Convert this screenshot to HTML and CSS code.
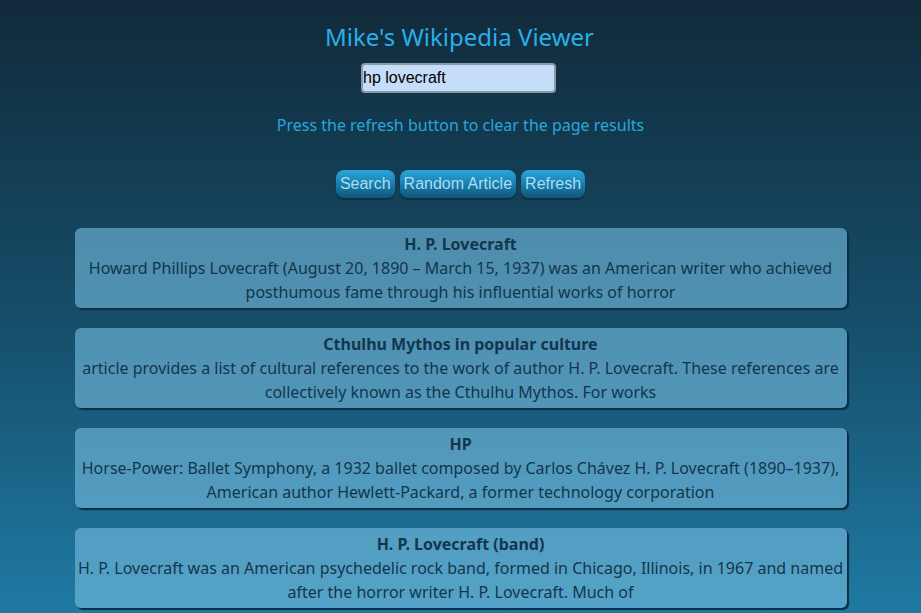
FILE: index.html
```html
<!DOCTYPE html>
<html>
<head>
<meta charset="utf-8">
<title>Mike's Wikipedia Viewer</title>
<link rel="stylesheet" href="styles.css">
</head>
<body>
<div class="page">
  <h1 class="title">Mike's Wikipedia Viewer</h1>
  <input class="search-input" type="text" value="hp lovecraft">
  <p class="hint">Press the refresh button to clear the page results</p>
  <div class="buttons">
    <button class="btn">Search</button>
    <button class="btn">Random Article</button>
    <button class="btn">Refresh</button>
  </div>
  <div class="results">
    <div class="card">
      <div class="card-title">H. P. Lovecraft</div>
      <div class="card-text">Howard Phillips Lovecraft (August 20, 1890 – March 15, 1937) was an American writer who achieved posthumous fame through his influential works of horror</div>
    </div>
    <div class="card">
      <div class="card-title">Cthulhu Mythos in popular culture</div>
      <div class="card-text">article provides a list of cultural references to the work of author H. P. Lovecraft. These references are collectively known as the Cthulhu Mythos. For works</div>
    </div>
    <div class="card">
      <div class="card-title">HP</div>
      <div class="card-text">Horse-Power: Ballet Symphony, a 1932 ballet composed by Carlos Chávez H. P. Lovecraft (1890–1937), American author Hewlett-Packard, a former technology corporation</div>
    </div>
    <div class="card">
      <div class="card-title">H. P. Lovecraft (band)</div>
      <div class="card-text">H. P. Lovecraft was an American psychedelic rock band, formed in Chicago, Illinois, in 1967 and named after the horror writer H. P. Lovecraft. Much of</div>
    </div>
  </div>
</div>
</body>
</html>
```
FILE: styles.css
```css
html, body {
  margin: 0;
  padding: 0;
  height: 100%;
  overflow: hidden;
}
body {
  background: linear-gradient(to bottom, #112a3a 0%, #16506d 55%, #1f7aa3 100%);
  font-family: "Noto Sans", "Open Sans", sans-serif;
}
.page {
  display: flex;
  flex-direction: column;
  align-items: center;
  padding-top: 20px;
}
.title {
  margin: 0 2px 0 0;
  font-size: 24px;
  font-weight: normal;
  line-height: 34px;
  color: #2aaee8;
}
.search-input {
  margin: 9px 4px 0 0;
  width: 195px;
  height: 30px;
  box-sizing: border-box;
  border: 2px solid #8c99a6;
  border-radius: 4px;
  background: #c4ddf8;
  font-family: "Liberation Sans", Arial, sans-serif;
  font-size: 16px;
  color: #000;
  padding: 0;
  outline: none;
}
.hint {
  margin: 20px 0 0;
  font-size: 16px;
  line-height: 24px;
  color: #2aa6dc;
}
.buttons {
  display: flex;
  gap: 5px;
  margin-top: 33px;
}
.btn {
  height: 28px;
  padding: 0 4px;
  border: none;
  border-radius: 8px;
  background: linear-gradient(to bottom, #2ba6dc 0%, #1a7fae 50%, #0f5677 100%);
  box-shadow: 0 2px 1px #0b3145;
  font-family: "Liberation Sans", Arial, sans-serif;
  font-size: 16px;
  color: #a9ddf3;
  cursor: pointer;
}
.results {
  margin-top: 30px;
  display: flex;
  flex-direction: column;
  gap: 20px;
  width: 772px;
}
.card {
  background: rgba(120, 190, 225, 0.6);
  border-radius: 6px;
  box-shadow: 2px 2px 1px #0c2e42;
  padding: 4px 0;
  text-align: center;
  color: #12364d;
  font-size: 16px;
  line-height: 24px;
}
.card-title {
  font-weight: bold;
}
```
